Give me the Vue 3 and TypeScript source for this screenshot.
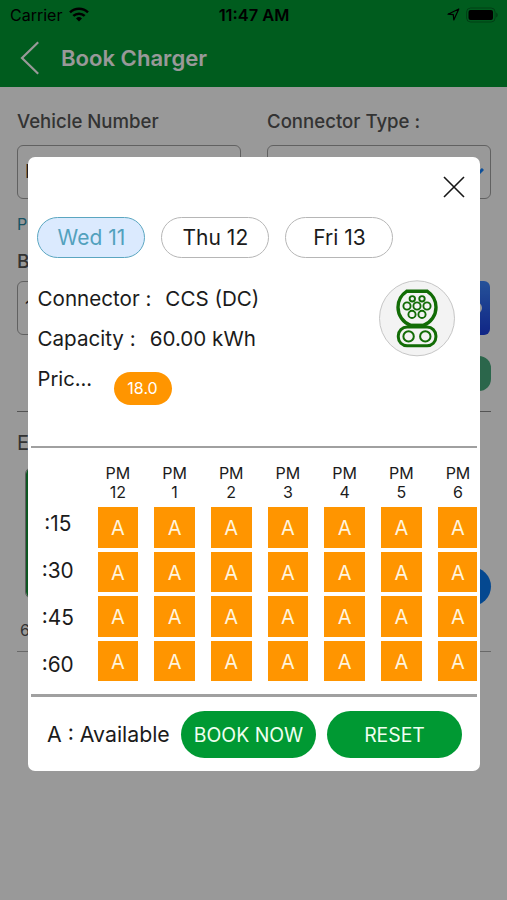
<script setup lang="ts">
import { ref } from 'vue'

interface Day { label: string }

const days: Day[] = [{ label: 'Wed 11' }, { label: 'Thu 12' }, { label: 'Fri 13' }]
const activeDay = ref(0)
const hours: string[] = ['12', '1', '2', '3', '4', '5', '6']
const quarters: string[] = [':15', ':30', ':45', ':60']
</script>

<template>
  <div class="screen">
    <header class="top">
      <div class="status">
        <div class="carrier">
          <span>Carrier</span>
          <svg width="20" height="15" viewBox="0 0 20 15" fill="none" stroke="#000" stroke-width="2.5">
            <path d="M1 5.3a13 13 0 0 1 18 0" />
            <path d="M4.3 8.9a8.3 8.3 0 0 1 11.4 0" />
            <path d="M7 11.4a4.4 4.4 0 0 1 6 0L10 14.4z" fill="#000" stroke="none" />
          </svg>
        </div>
        <span class="clock">11:47 AM</span>
        <div class="indicators">
          <svg width="13" height="13" viewBox="0 0 13 13" fill="none" stroke="#000" stroke-width="1.2" stroke-linejoin="round">
            <path d="M1 6.2 11.8 1 6.8 12 6.3 6.6z" />
          </svg>
          <svg width="32" height="16" viewBox="0 0 32 16">
            <rect x="0.6" y="1" width="28.5" height="14" rx="4" fill="none" stroke="#000" stroke-opacity=".3" />
            <rect x="2.5" y="3" width="24.5" height="10" rx="2" />
            <path d="M30.3 5.5a3 3 0 0 1 0 5z" fill-opacity=".4" />
          </svg>
        </div>
      </div>
      <div class="nav">
        <svg width="20" height="34" viewBox="0 0 20 34" fill="none" stroke="#fff" stroke-width="2.2">
          <path d="M18.2 1.3 2 17l16.2 15.7" />
        </svg>
        <h1>Book Charger</h1>
      </div>
    </header>

    <main class="page">
      <div class="fields">
        <div>
          <label class="label">Vehicle Number</label>
          <div class="input">H</div>
        </div>
        <div>
          <label class="label">Connector Type :</label>
          <div class="input select">
            <svg width="14" height="9" viewBox="0 0 14 9" fill="none" stroke="#1684ff" stroke-width="3"><path d="m1 1 6 6 6-6" /></svg>
          </div>
        </div>
      </div>
      <p class="link">P</p>
      <p class="subhead">B</p>
      <div class="row">
        <div class="input short">1</div>
        <div class="blue"><span class="dot"></span></div>
      </div>
      <div class="green"></div>
      <p class="section">E</p>
      <div class="results">
        <div class="card"></div>
        <div class="round"></div>
      </div>
      <p class="caption">6</p>
    </main>

    <div class="overlay">
      <section class="modal">
        <div class="close-row">
          <svg width="22" height="22" viewBox="0 0 22 22" stroke="#171717" stroke-width="1.6"><path d="m1 1 20 20M21 1 1 21" /></svg>
        </div>
        <div class="days">
          <button v-for="(d, i) in days" :key="d.label" class="day" :class="{ active: i === activeDay }" @click="activeDay = i">{{ d.label }}</button>
        </div>

        <div class="info">
          <div class="details">
            <div class="line"><span>Connector :</span><span class="value">CCS (DC)</span></div>
            <div class="line"><span>Capacity :</span><span class="value">60.00 kWh</span></div>
            <div class="line"><span class="price">Pric...</span><span class="badge">18.0</span></div>
          </div>
          <svg class="plug" width="77" height="77" viewBox="0 0 77 77" fill="none" stroke="#126c06">
            <circle cx="38" cy="38.3" r="37.5" fill="#f3f3f3" stroke="#c6c6c6" />
            <path d="M27.6 11.3H48.4C54 15 57 20.5 57 27.3C57 35.5 52 42.5 44.5 45.4H31.5C24 42.5 19 35.5 19 27.3C19 20.5 22 15 27.6 11.3Z" stroke-width="3.4" />
            <rect x="19.3" y="47" width="37.6" height="18.8" rx="8.8" stroke-width="3" />
            <path d="M30 45.6h16" stroke-width="3.6" />
            <g stroke-width="1.9">
              <circle cx="33.3" cy="18.8" r="2.7" /><circle cx="43" cy="18.8" r="2.7" />
              <circle cx="28" cy="26" r="3.6" /><circle cx="38" cy="26" r="3.6" /><circle cx="48" cy="26" r="3.6" />
              <circle cx="33" cy="34.4" r="3.6" /><circle cx="43" cy="34.4" r="3.6" />
            </g>
            <g stroke-width="2">
              <circle cx="29.6" cy="56.4" r="5.2" /><circle cx="46.3" cy="56.4" r="5.2" />
            </g>
          </svg>
        </div>

        <div class="schedule">
          <div class="quarters">
            <span v-for="q in quarters" :key="q">{{ q }}</span>
          </div>
          <div class="hours">
            <div v-for="h in hours" :key="h" class="hour">
              <div class="head">PM<br />{{ h }}</div>
              <div v-for="q in quarters" :key="q" class="slot">A</div>
            </div>
          </div>
        </div>

        <footer class="actions">
          <span class="legend">A : Available</span>
          <button class="btn">BOOK NOW</button>
          <button class="btn reset">RESET</button>
        </footer>
      </section>
    </div>
  </div>
</template>

<style>
body { margin: 0; }
</style>

<style scoped>
* { box-sizing: border-box; }
h1, p { margin: 0; }
svg { display: block; flex: none; }
button { padding: 0; font: inherit; }
.screen { position: relative; width: 507px; height: 900px; overflow: hidden; background: #fff; color: #1b1b1b; font-family: Inter, "Liberation Sans", sans-serif; white-space: nowrap; }
.top { height: 87px; background: #009933; }
.status { height: 31px; display: grid; grid-template-columns: 1fr auto 1fr; align-items: center; padding: 0 9px 2px 10px; font-size: 16px; color: #000; }
.carrier { display: flex; align-items: center; gap: 7px; }
.clock { font-weight: 600; font-size: 16.4px; }
.indicators { display: flex; justify-content: flex-end; align-items: center; gap: 6px; }
.nav { display: flex; align-items: center; height: 54px; padding-left: 20px; gap: 21px; color: #fff; }
h1 { font-size: 22.1px; font-weight: 600; line-height: 30px; }
.page { padding: 21px 16px 0 17px; color: #555; }
.fields { display: grid; grid-template-columns: 224px 224px; gap: 26px; }
.label { display: block; height: 37px; line-height: 26px; font-size: 18.6px; font-weight: 500; }
.input { height: 54px; border: 1.5px solid #a2a2a2; border-radius: 6px; padding-left: 7px; line-height: 51px; font-size: 19px; color: #333; }
.select { display: flex; align-items: center; justify-content: flex-end; padding-right: 6px; }
.link { margin-top: 14px; line-height: 22px; font-size: 16px; color: #2b8ba6; }
.subhead { margin-top: 16px; line-height: 22px; font-size: 19px; font-weight: 500; }
.row { margin-top: 8px; display: flex; justify-content: space-between; }
.short { width: 224px; }
.blue { width: 100px; height: 54px; border-radius: 6px; background: linear-gradient(#3f89ff, #1b3fe0); margin-right: 1px; padding-right: 8px; display: flex; align-items: center; justify-content: flex-end; }
.dot { width: 12px; height: 12px; border-radius: 50%; background: #fff; }
.green { margin: 21px 0 20px auto; width: 120px; height: 35px; border-radius: 12px; background: #49aa7d; }
.section { border-top: 1.5px solid #8c8c8c; padding: 18px 0 0 0; line-height: 26px; font-size: 20px; }
.results { margin-top: 11px; padding-left: 8px; height: 139px; display: flex; justify-content: space-between; align-items: flex-end; }
.card { align-self: flex-start; width: 200px; height: 132px; border: 1px solid #999; border-radius: 7px; box-shadow: inset 2px 0 #16923a; }
.round { width: 39px; height: 39px; border-radius: 50%; background: #0879f0; }
.caption { margin-top: 13px; padding-left: 3px; line-height: 22px; height: 33px; font-size: 16px; border-bottom: 1px solid #b0b0b0; }
.overlay { position: absolute; inset: 0; background: rgba(0, 0, 0, .4); padding: 157px 27px 0 28px; }
.modal { height: 614px; background: #fff; border-radius: 7px; overflow: hidden; display: flex; flex-direction: column; }
.close-row { height: 60px; padding: 19px 15px 0 0; display: flex; justify-content: flex-end; flex: none; }
.days { display: flex; gap: 16px; padding-left: 9.4px; flex: none; }
.day { width: 108px; height: 41px; border: 1.5px solid #b6b6b6; border-radius: 21px; background: #fff; color: #1b1b1b; font-size: 21px; }
.day.active { background: #dbeafe; border-color: #5ba6c0; color: #52a1bd; }
.info { height: 190px; flex: none; margin: 0 3px 0 2.5px; padding: 21px 21px 0 7px; border-bottom: 2px solid #a0a0a0; display: flex; justify-content: space-between; }
.line { height: 40px; line-height: 40px; display: flex; font-size: 20.6px; }
.value { margin-left: 14px; }
.price { width: 76px; font-size: 20.2px; }
.badge { margin-top: 13px; width: 58px; height: 32.5px; border-radius: 17px; background: #ff9500; color: #fff; font-size: 16px; line-height: 33px; text-align: center; }
.plug { margin-top: 1px; }
.schedule { height: 249px; flex: none; margin: 0 3px 0 2.5px; border-bottom: 3px solid #a0a0a0; display: flex; overflow: hidden; }
.quarters { width: 67px; padding: 51.5px 12.5px 0 0; display: flex; flex-direction: column; text-align: center; font-size: 20.8px; flex: none; }
.quarters span { height: 47px; line-height: 47px; }
.hours { display: flex; gap: 16px; }
.hour { width: 40.7px; flex: none; }
.head { height: 59px; padding-top: 16px; line-height: 18.7px; font-size: 16px; text-align: center; }
.slot { height: 40.7px; line-height: 42px; margin-bottom: 3.9px; background: #ff9500; color: #fff4dd; font-size: 20px; text-align: center; }
.actions { flex: 1; display: flex; align-items: center; padding: 1px 0 0 19px; }
.legend { width: 134px; padding-bottom: 2px; font-size: 21.3px; }
.btn { width: 135px; height: 47px; border: 0; border-radius: 24px; background: #009933; color: #effff0; font-size: 19.4px; }
.reset { margin-left: 11px; }
</style>
